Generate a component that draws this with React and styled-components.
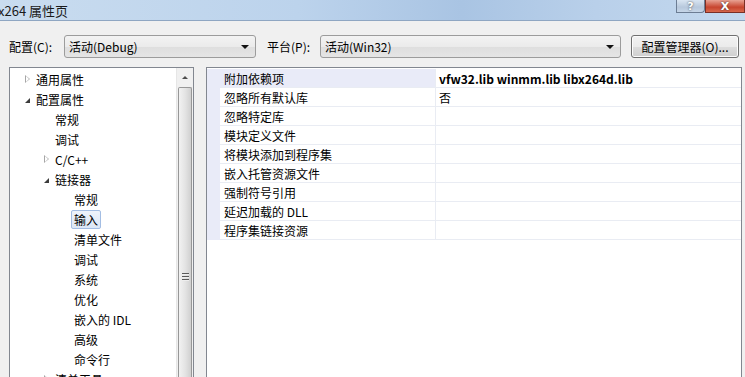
import React from "react";
import styled, { createGlobalStyle } from "styled-components";

const GlobalStyle = createGlobalStyle`
  html, body {
    margin: 0;
    padding: 0;
    background: #f0f0f0;
  }
  * {
    box-sizing: border-box;
  }
`;

const Window = styled.div`
  width: 745px;
  height: 377px;
  overflow: hidden;
  display: flex;
  flex-direction: column;
  background: #f0f0f0;
  font-family: "Noto Sans CJK SC", "Liberation Sans", sans-serif;
  font-size: 12px;
  color: #000;
`;

const TitleBar = styled.div`
  height: 21px;
  flex: none;
  display: flex;
  align-items: center;
  justify-content: space-between;
  background: linear-gradient(90deg, #c9dcef 0%, #bcd3ec 40%, #a9c4e3 62%, #b9d0ea 80%, #c3d8ee 100%);
  border-bottom: 1px solid #8fa6c2;
`;

const Title = styled.span`
  font-size: 13px;
  color: #1a1a1a;
  margin-left: -2px;
  margin-top: 1px;
`;

const Caption = styled.div`
  display: flex;
  align-self: flex-start;
  height: 13px;
  margin-right: 0;
`;

const CaptionButton = styled.div`
  width: ${(p) => p.$w}px;
  height: 13px;
  display: flex;
  align-items: flex-end;
  justify-content: center;
  border: 1px solid ${(p) => (p.$close ? "#7a2f26" : "#6c7d94")};
  border-top: none;
  border-radius: 0 0 ${(p) => (p.$close ? "0 0" : "4px 0")};
  background: ${(p) =>
    p.$close
      ? "linear-gradient(#e8a293, #c7452f 60%, #d9694c)"
      : "linear-gradient(#d9e5f2, #b7c8dc 60%, #c6d6e8)"};
  color: #fff;
  font-family: "DejaVu Sans", sans-serif;
  font-weight: bold;
  font-size: 11px;
  line-height: 11px;
  text-shadow: 0 0 2px #333;
`;

const Body = styled.div`
  flex: 1;
  display: flex;
  flex-direction: column;
  padding: 14px 3px 0 9px;
  min-height: 0;
`;

const Toolbar = styled.div`
  display: flex;
  align-items: center;
  height: 23px;
`;

const Label = styled.span`
  width: ${(p) => p.$w}px;
  flex: none;
  margin-left: ${(p) => p.$ml || 0}px;
`;

const Combo = styled.div`
  width: ${(p) => p.$w}px;
  height: 23px;
  flex: none;
  display: flex;
  align-items: center;
  justify-content: space-between;
  padding: 0 6px 0 4px;
  border: 1px solid #9c9c9c;
  border-radius: 3px;
  background: linear-gradient(#f3f3f3, #ebebeb 50%, #dedede 51%, #e5e5e5);
`;

const Arrow = styled.span`
  width: 0;
  height: 0;
  border-left: 4px solid transparent;
  border-right: 4px solid transparent;
  border-top: 4px solid #111;
  margin-top: 1px;
`;

const Button = styled.div`
  width: 108px;
  height: 23px;
  margin-left: 10px;
  flex: none;
  display: flex;
  align-items: center;
  justify-content: center;
  border: 1px solid #707070;
  border-radius: 3px;
  background: linear-gradient(#f2f2f2, #ebebeb 50%, #dddddd 51%, #cfcfcf);
  box-shadow: inset 0 0 0 1px #fcfcfc;
`;

const Panels = styled.div`
  flex: 1;
  display: flex;
  gap: 12px;
  margin-top: 9px;
  min-height: 0;
`;

const TreePanel = styled.div`
  width: 185px;
  flex: none;
  display: flex;
  border: 1px solid #828790;
  border-bottom: none;
  background: #fff;
`;

const TreeList = styled.div`
  flex: 1;
  padding-top: 1px;
`;

const TreeItem = styled.div`
  height: 20px;
  display: flex;
  align-items: center;
  padding-left: ${(p) => 12 + p.$level * 19}px;
`;

const Expander = styled.span`
  width: 11px;
  flex: none;
  display: flex;
  justify-content: center;
`;

const OpenTri = styled.span`
  width: 0;
  height: 0;
  border-top: 4px solid transparent;
  border-bottom: 4px solid transparent;
  border-left: 5px solid #a6a6a6;
  position: relative;
  &::after {
    content: "";
    position: absolute;
    left: -4px;
    top: -3px;
    border-top: 3px solid transparent;
    border-bottom: 3px solid transparent;
    border-left: 3px solid #fff;
  }
`;

const ClosedTri = styled.span`
  width: 0;
  height: 0;
  border-left: 5px solid transparent;
  border-bottom: 5px solid #3c3c3c;
  margin-top: 2px;
`;

const ItemText = styled.span`
  padding: 1px 2px;
  border: 1px solid ${(p) => (p.$selected ? "#a3bde3" : "transparent")};
  border-radius: 2px;
  background: ${(p) => (p.$selected ? "linear-gradient(#eef3fb, #dce7f6)" : "none")};
  line-height: 15px;
  white-space: nowrap;
`;

const ScrollBar = styled.div`
  width: 17px;
  flex: none;
  display: flex;
  flex-direction: column;
  background: #f0f0f0;
  border-left: 1px solid #e6e6e6;
`;

const ScrollUp = styled.div`
  height: 18px;
  display: flex;
  align-items: center;
  justify-content: center;
`;

const UpArrow = styled.span`
  width: 0;
  height: 0;
  border-left: 3px solid transparent;
  border-right: 3px solid transparent;
  border-bottom: 3px solid #4d4d4d;
`;

const Thumb = styled.div`
  flex: 1;
  margin: 1px 1px 0 1px;
  border: 1px solid #979797;
  border-bottom: none;
  border-radius: 2px 2px 0 0;
  background: linear-gradient(90deg, #f2f2f2, #e4e4e4 50%, #d0d0d0);
  display: flex;
  justify-content: center;
  padding-top: 185px;
`;

const Grip = styled.span`
  width: 7px;
  height: 8px;
  background: repeating-linear-gradient(#5a5a5a 0 1px, #eee 1px 2px, transparent 2px 3px);
`;

const GridPanel = styled.div`
  flex: 1;
  border: 1px solid #828790;
  border-bottom: none;
  background: #fff;
  padding-top: 1px;
`;

const GridRow = styled.div`
  height: 19px;
  display: grid;
  grid-template-columns: 13px 216px 1fr;
  border-bottom: 1px solid #e9ecf3;
`;

const Gutter = styled.div`
  background: #e9ebf8;
  margin-bottom: -1px;
`;

const NameCell = styled.div`
  display: flex;
  align-items: center;
  padding-left: 4px;
  border-right: 1px solid #e9ecf3;
  background: ${(p) => (p.$active ? "#e9ebf8" : "#fff")};
`;

const ValueCell = styled.div`
  display: flex;
  align-items: center;
  padding-left: 3px;
  font-weight: ${(p) => (p.$bold ? 700 : 400)};
  white-space: nowrap;
`;

const tree = [
  { level: 0, text: "通用属性", exp: "closed" },
  { level: 0, text: "配置属性", exp: "open" },
  { level: 1, text: "常规" },
  { level: 1, text: "调试" },
  { level: 1, text: "C/C++", exp: "closed" },
  { level: 1, text: "链接器", exp: "open" },
  { level: 2, text: "常规" },
  { level: 2, text: "输入", selected: true },
  { level: 2, text: "清单文件" },
  { level: 2, text: "调试" },
  { level: 2, text: "系统" },
  { level: 2, text: "优化" },
  { level: 2, text: "嵌入的 IDL" },
  { level: 2, text: "高级" },
  { level: 2, text: "命令行" },
  { level: 1, text: "清单工具", exp: "closed" },
];

const props = [
  { name: "附加依赖项", value: "vfw32.lib winmm.lib libx264d.lib", bold: true, active: true },
  { name: "忽略所有默认库", value: "否" },
  { name: "忽略特定库", value: "" },
  { name: "模块定义文件", value: "" },
  { name: "将模块添加到程序集", value: "" },
  { name: "嵌入托管资源文件", value: "" },
  { name: "强制符号引用", value: "" },
  { name: "延迟加载的 DLL", value: "" },
  { name: "程序集链接资源", value: "" },
];

export default function App() {
  return (
    <Window>
      <GlobalStyle />
      <TitleBar>
        <Title>x264 属性页</Title>
        <Caption>
          <CaptionButton $w={29}>?</CaptionButton>
          <CaptionButton $w={40} $close>
            X
          </CaptionButton>
        </Caption>
      </TitleBar>
      <Body>
        <Toolbar>
          <Label $w={55}>配置(C):</Label>
          <Combo $w={192}>
            <span>活动(Debug)</span>
            <Arrow />
          </Combo>
          <Label $w={53} $ml={11}>平台(P):</Label>
          <Combo $w={301}>
            <span>活动(Win32)</span>
            <Arrow />
          </Combo>
          <Button>配置管理器(O)...</Button>
        </Toolbar>
        <Panels>
          <TreePanel>
            <TreeList>
              {tree.map((t, i) => (
                <TreeItem key={i} $level={t.level}>
                  <Expander>
                    {t.exp === "closed" && <OpenTri />}
                    {t.exp === "open" && <ClosedTri />}
                  </Expander>
                  <ItemText $selected={t.selected}>{t.text}</ItemText>
                </TreeItem>
              ))}
            </TreeList>
            <ScrollBar>
              <ScrollUp>
                <UpArrow />
              </ScrollUp>
              <Thumb>
                <Grip />
              </Thumb>
            </ScrollBar>
          </TreePanel>
          <GridPanel>
            {props.map((p, i) => (
              <GridRow key={i}>
                <Gutter />
                <NameCell $active={p.active}>{p.name}</NameCell>
                <ValueCell $bold={p.bold}>{p.value}</ValueCell>
              </GridRow>
            ))}
          </GridPanel>
        </Panels>
      </Body>
    </Window>
  );
}
